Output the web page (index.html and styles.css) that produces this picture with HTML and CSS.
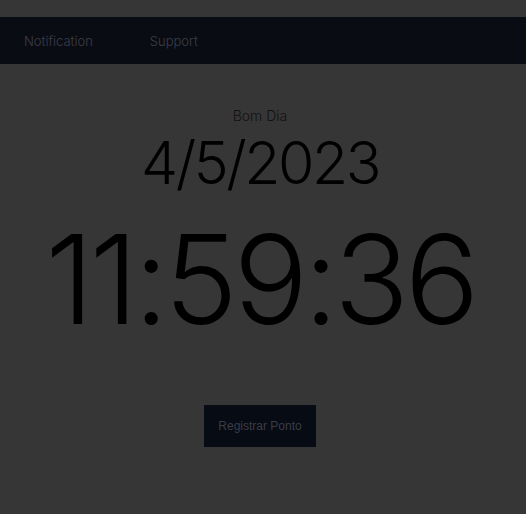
FILE: index.html
```html
<!DOCTYPE html>
<html lang="pt">
<head>
<meta charset="utf-8">
<title>Relógio de Ponto</title>
<link rel="stylesheet" href="styles.css">
</head>
<body>
<nav class="nav">
  <a class="nav-link" href="#">Notification</a>
  <a class="nav-link" href="#">Support</a>
</nav>
<main class="clock">
  <p class="greeting">Bom Dia</p>
  <p class="date">4/5/2023</p>
  <p class="time">11:59:36</p>
  <button class="punch">Registrar Ponto</button>
</main>
</body>
</html>
```
FILE: styles.css
```css
html, body {
  margin: 0;
  padding: 0;
  background: #363636;
  height: 100%;
}
body {
  padding-top: 17px;
  font-family: "Inter", "Lato", sans-serif;
}
.nav {
  height: 47px;
  background: #0a0c14;
  display: flex;
  align-items: center;
  gap: 57px;
  padding: 0 24px;
}
.nav-link {
  color: #3c3e46;
  text-decoration: none;
  font-size: 13px;
  font-weight: 300;
}
.clock {
  display: flex;
  flex-direction: column;
  align-items: center;
  padding-right: 6px;
}
.greeting {
  margin: 43px 0 0;
  font-size: 14px;
  color: #111;
  font-weight: 300;
  line-height: 18px;
}
.date {
  margin: 3px 0 0;
  font-size: 59px;
  font-weight: 300;
  line-height: 70px;
  color: #000;
  letter-spacing: -2.5px;
}
.time {
  margin: 10px 0 0;
  font-size: 124px;
  font-weight: 350;
  line-height: 142px;
  color: #000;
  letter-spacing: -4.5px;
}
.punch {
  margin-top: 55px;
  width: 112px;
  height: 42px;
  background: #070b14;
  border: none;
  color: #3a3d47;
  font-family: "Liberation Sans", Arial, sans-serif;
  font-size: 12px;
  padding: 0;
}
```
